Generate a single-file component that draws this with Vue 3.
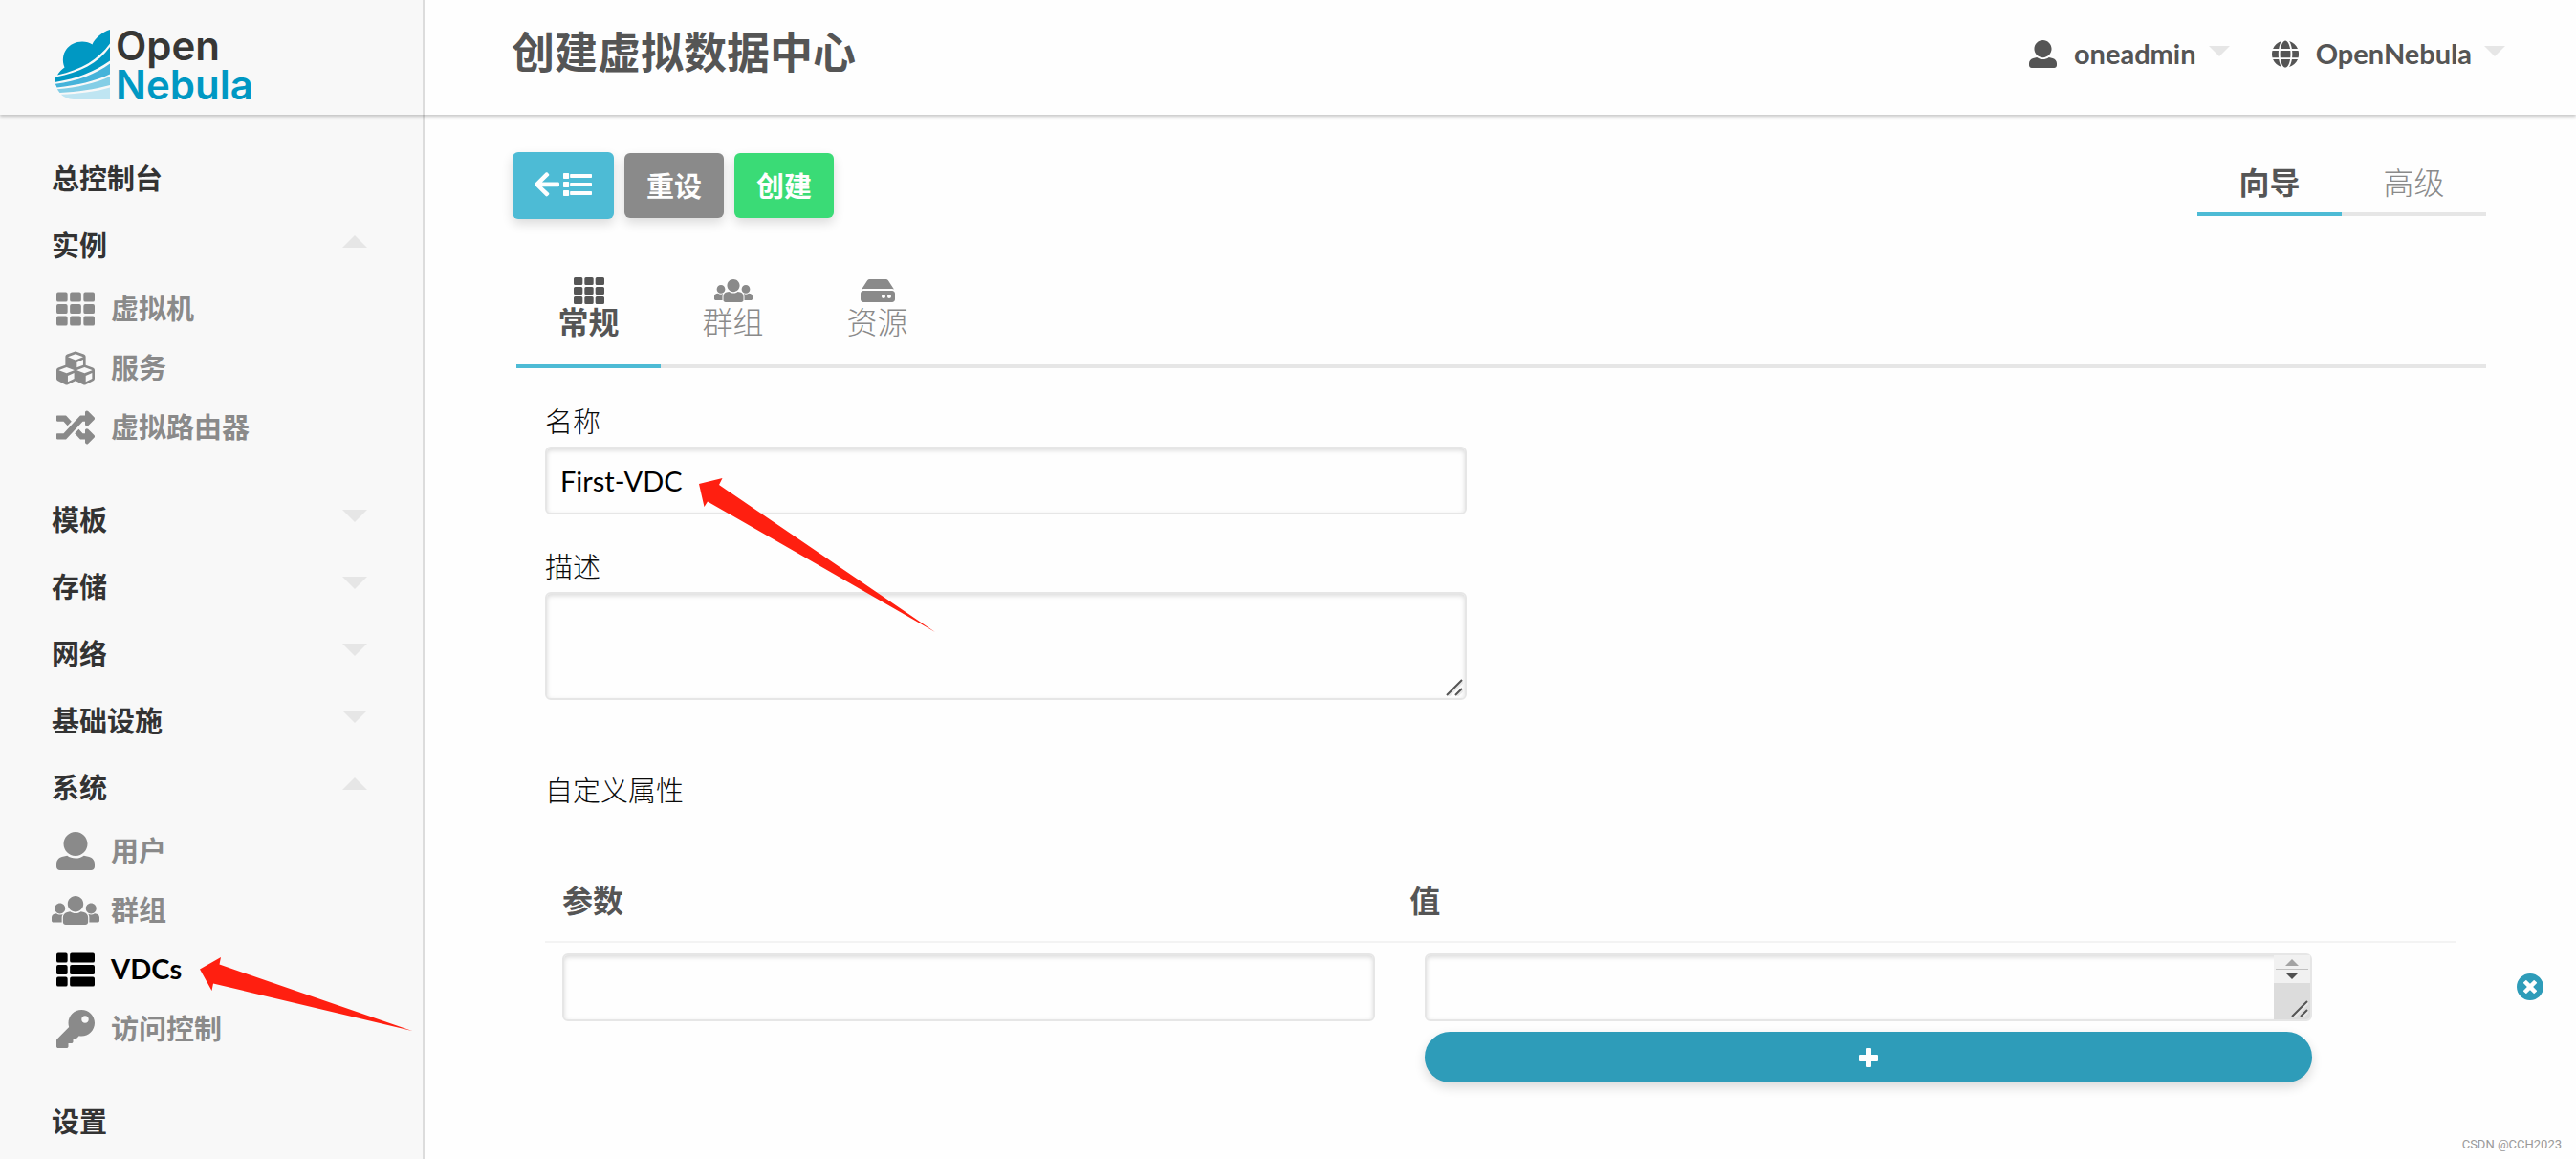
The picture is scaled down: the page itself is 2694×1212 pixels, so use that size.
<template>
  <div class="app">
    <header class="topbar">
      <a class="logo" href="#">
        <svg class="logo-mark" viewBox="0 0 58 73" aria-hidden="true">
          <path fill="#0098c3" d="M58 0v14.500C46 31 28 42 3 47.500C5 44 8 41 10.500 39.500C5 25 15 12.500 29 12.500C33 12.500 37 13.500 39.500 15.500C42 9 50 2.500 58 0z" />
          <path fill="#0098c3" d="M58 18v14.500C42 44 24 51 .3 55C0 53 .5 51 1.500 49.500C26 45 46 35 58 18z" />
          <path fill="#45b3da" d="M58 35.500v11C42 54 24 58 2.500 60.500L.8 56.800C24 54 43 46.500 58 35.500z" />
          <path fill="#84cee6" d="M58 49v9C42 62.500 24 65 5.500 66L2.800 62.300C24 60.500 43 56 58 49z" />
          <path fill="#bfe5f2" d="M58 60.500V73H20C14 72.500 10 71 6.800 67.800C25 67 43 65 58 60.500z" />
        </svg>
        <span class="logo-text">
          <span>Open</span>
          <span class="logo-blue">Nebula</span>
        </span>
      </a>
      <h1 class="title">创建虚拟数据中心</h1>
      <div class="account">
        <button v-for="m in menus" :key="m.label" class="menu-btn">
          <svg class="menu-icon" :viewBox="icons[m.icon].box"><path :d="icons[m.icon].d" /></svg>
          <span>{{ m.label }}</span>
          <i class="caret small"></i>
        </button>
      </div>
    </header>

    <nav class="sidebar">
      <div v-for="group in nav" :key="group.label" class="nav-group">
        <a href="#" class="nav-main" @click.prevent="toggle(group)">
          <span>{{ group.label }}</span>
          <i v-if="group.children" :class="['caret', { up: group.open }]"></i>
        </a>
        <ul v-if="group.open" class="nav-sub">
          <li v-for="item in group.children" :key="item.label">
            <a
              href="#"
              :class="['nav-item', { active: current === item.label }]"
              @click.prevent="current = item.label"
            >
              <span class="nav-icon">
                <svg :viewBox="icons[item.icon].box"><path :d="icons[item.icon].d" /></svg>
              </span>
              <span>{{ item.label }}</span>
            </a>
            <svg v-if="item.pointer" class="pointer pointer-nav" viewBox="0 0 222 77" aria-hidden="true">
              <path d="M0 12.500L22 0L20.500 7.500L222 77L14 27.500L12.500 35z" />
            </svg>
          </li>
        </ul>
      </div>
    </nav>

    <main class="content">
      <div class="toolbar">
        <div class="actions">
          <button class="btn btn-back" aria-label="返回列表">
            <svg class="icon-arrow" :viewBox="icons.arrow.box"><path :d="icons.arrow.d" /></svg>
            <svg class="icon-list" :viewBox="icons.list.box"><path :d="icons.list.d" /></svg>
          </button>
          <button class="btn btn-reset" @click="reset">重设</button>
          <button class="btn btn-create">创建</button>
        </div>
        <div class="modes">
          <button
            v-for="m in modes"
            :key="m"
            :class="['mode', { active: mode === m }]"
            @click="mode = m"
          >{{ m }}</button>
        </div>
      </div>

      <div class="tabs">
        <button
          v-for="t in tabs"
          :key="t.label"
          :class="['tab', { active: tab === t.label }]"
          @click="tab = t.label"
        >
          <svg class="tab-icon" :viewBox="icons[t.icon].box"><path :d="icons[t.icon].d" /></svg>
          <span>{{ t.label }}</span>
        </button>
      </div>

      <form class="form" @submit.prevent>
        <div class="field">
          <label for="vdc-name">名称</label>
          <input id="vdc-name" v-model="form.name" class="control" type="text" />
          <svg class="pointer pointer-name" viewBox="0 0 247 161" aria-hidden="true">
            <path d="M0 6L24.500 0L21 7L247 161L9 24.500L5.500 30z" />
          </svg>
        </div>
        <div class="field">
          <label for="vdc-desc">描述</label>
          <div class="area">
            <textarea id="vdc-desc" v-model="form.description" class="control tall"></textarea>
            <svg class="grip" viewBox="0 0 18 18" aria-hidden="true">
              <path class="grip-light" d="M3 18L18 3M12 18L18 12" />
              <path d="M1 17L17 1M10 17L17 10" />
            </svg>
          </div>
        </div>

        <p class="section">自定义属性</p>
        <table class="attrs">
          <colgroup>
            <col class="col-key" />
            <col class="col-value" />
            <col class="col-space" />
            <col />
          </colgroup>
          <thead>
            <tr>
              <th>参数</th>
              <th>值</th>
              <th></th>
              <td></td>
            </tr>
          </thead>
          <tbody>
            <tr v-for="(attr, i) in form.attrs" :key="attr.id">
              <td class="cell-key">
                <input v-model="attr.key" class="control" type="text" aria-label="参数" />
              </td>
              <td class="cell-value">
                <div class="area">
                  <textarea v-model="attr.value" class="control" aria-label="值"></textarea>
                  <div class="scroller" aria-hidden="true">
                    <svg class="scroller-arrows" viewBox="0 0 38 29">
                      <path fill="#a3a3a3" d="M12 11L19 4L26 11z" />
                      <path fill="#c1c1c1" d="M2 14H36V15H2z" />
                      <path fill="#505050" d="M12 18L19 25L26 18z" />
                    </svg>
                  </div>
                  <svg class="grip" viewBox="0 0 18 18" aria-hidden="true">
                    <path class="grip-light" d="M3 18L18 3M12 18L18 12" />
                    <path d="M1 17L17 1M10 17L17 10" />
                  </svg>
                </div>
              </td>
              <td></td>
              <td class="cell-remove">
                <button type="button" class="remove" aria-label="删除" @click="form.attrs.splice(i, 1)">
                  <svg :viewBox="icons.remove.box"><path :d="icons.remove.d" /></svg>
                </button>
              </td>
            </tr>
          </tbody>
          <tfoot>
            <tr>
              <td></td>
              <td class="cell-value">
                <button type="button" class="add" aria-label="添加" @click="addAttr">
                  <svg viewBox="0 0 20 20"><path d="M8 0h4q1 0 1 1v6h6q1 0 1 1v4q0 1-1 1h-6v6q0 1-1 1h-4q-1 0-1-1v-6h-6q-1 0-1-1v-4q0-1 1-1h6v-6q0-1 1-1z" /></svg>
                </button>
              </td>
            </tr>
          </tfoot>
        </table>
      </form>
    </main>

    <span class="watermark">CSDN @CCH2023</span>
  </div>
</template>

<script setup>
import { ref, reactive } from 'vue'

// rounded rectangle as path data
function box(x, y, w, h, r) {
  return `M${x + r} ${y}h${w - 2 * r}a${r} ${r} 0 0 1 ${r} ${r}v${h - 2 * r}a${r} ${r} 0 0 1-${r} ${r}h-${w - 2 * r}a${r} ${r} 0 0 1-${r}-${r}v-${h - 2 * r}a${r} ${r} 0 0 1 ${r}-${r}z`
}

const rows = [32, 192, 352]

const icons = {
  th: {
    box: '0 0 512 512',
    d: rows.map(y => box(0, y, 149, 128, 24) + box(181, y, 150, 128, 24) + box(363, y, 149, 128, 24)).join(''),
  },
  thList: {
    box: '0 0 512 512',
    d: rows.map(y => box(0, y, 149, 128, 24) + box(181, y, 331, 128, 24)).join(''),
  },
  list: {
    box: '0 0 512 512',
    d: [50, 204, 358].map(y => box(0, y, 104, 104, 12) + box(122, y + 18, 390, 68, 12)).join(''),
  },
  cubes: {
    box: '0 0 512 512',
    d: 'M488.6 250.2L392 214V105.5c0-15-9.3-28.4-23.4-33.7l-100-37.5c-8.1-3.1-17.1-3.1-25.3 0l-100 37.5c-14.1 5.3-23.4 18.7-23.4 33.7V214l-96.6 36.2C9.3 255.5 0 268.9 0 283.9V394c0 13.6 7.7 26.1 19.9 32.2l100 50c10.1 5.1 22.1 5.1 32.2 0l103.9-52 103.9 52c10.1 5.1 22.1 5.1 32.2 0l100-50c12.2-6.1 19.9-18.6 19.9-32.2V283.9c0-15-9.3-28.4-23.4-33.7zM358 214.8l-85 31.9v-68.2l85-37v73.3zM154 104.1l102-38.2 102 38.2v.6l-102 41.4-102-41.4v-.6zm84 291.1l-85 42.5v-79.1l85-38.8v75.4zm0-112l-102 41.4-102-41.4v-.6l102-38.2 102 38.2v.6zm240 112l-85 42.5v-79.1l85-38.8v75.4zm0-112l-102 41.4-102-41.4v-.6l102-38.2 102 38.2v.6z',
  },
  random: {
    box: '0 0 512 512',
    d: 'M504.971 359.029c9.373 9.373 9.373 24.569 0 33.941l-80 79.984c-15.01 15.01-40.971 4.49-40.971-16.971V416h-58.785a12.004 12.004 0 0 1-8.773-3.812l-70.556-75.596 53.333-57.143L352 336h32v-39.981c0-21.438 25.943-31.998 40.971-16.971l80 79.981zM12 176h84l52.781 56.551 53.333-57.143-70.556-75.596A11.999 11.999 0 0 0 122.785 96H12c-6.627 0-12 5.373-12 12v56c0 6.627 5.373 12 12 12zm372 0v39.984c0 21.46 25.961 31.98 40.971 16.971l80-79.984c9.373-9.373 9.373-24.569 0-33.941l-80-79.981C409.943 24.021 384 34.582 384 56.019V96h-58.785a12.004 12.004 0 0 0-8.773 3.812L96 336H12c-6.627 0-12 5.373-12 12v56c0 6.627 5.373 12 12 12h110.785c3.326 0 6.503-1.381 8.773-3.812L352 176h32z',
  },
  user: {
    box: '0 0 512 512',
    d: 'M256 0c88.366 0 160 71.634 160 160s-71.634 160-160 160S96 248.366 96 160 167.634 0 256 0zm183.283 333.821l-71.313-17.828c-74.923 53.89-165.738 41.864-223.94 0l-71.313 17.828C29.981 344.505 0 382.903 0 426.955V464c0 26.51 21.49 48 48 48h416c26.51 0 48-21.49 48-48v-37.045c0-44.052-29.981-82.45-72.717-93.134z',
  },
  users: {
    box: '0 0 640 512',
    d: 'M320 64c57.99 0 105 47.01 105 105s-47.01 105-105 105-105-47.01-105-105S262.01 64 320 64zm113.463 217.366l-39.982-9.996c-49.168 35.365-108.766 27.473-146.961 0l-39.982 9.996C174.485 289.379 152 318.177 152 351.216V412c0 19.882 16.118 36 36 36h264c19.882 0 36-16.118 36-36v-60.784c0-33.039-22.485-61.837-54.537-69.85zM528 300c38.66 0 70-31.34 70-70s-31.34-70-70-70-70 31.34-70 70 31.34 70 70 70zm-416 0c38.66 0 70-31.34 70-70s-31.34-70-70-70-70 31.34-70 70 31.34 70 70 70zm24 112v-60.784c0-16.551 4.593-32.204 12.703-45.599-29.988 14.72-63.336 8.708-85.69-7.37l-26.655 6.664C14.99 310.252 0 329.452 0 351.477V392c0 13.255 10.745 24 24 24h112.169a52.417 52.417 0 0 1-.169-4zm467.642-107.09l-26.655-6.664c-27.925 20.086-60.89 19.233-85.786 7.218C499.369 318.893 504 334.601 504 351.216V412c0 1.347-.068 2.678-.169 4H616c13.255 0 24-10.745 24-24v-40.523c0-22.025-14.99-41.225-36.358-46.567z',
  },
  key: {
    box: '0 0 512 512',
    d: 'M512 176.001C512 273.203 433.202 352 336 352c-11.22 0-22.19-1.062-32.827-3.069l-24.012 27.014A23.999 23.999 0 0 1 261.223 384H224v40c0 13.255-10.745 24-24 24h-40v40c0 13.255-10.745 24-24 24H24c-13.255 0-24-10.745-24-24v-78.059c0-6.365 2.529-12.47 7.029-16.971l161.802-161.802C163.108 213.814 160 195.271 160 176 160 78.798 238.797.001 335.999 0 433.488-.001 512 78.511 512 176.001zM336 128c0 26.51 21.49 48 48 48s48-21.49 48-48-21.49-48-48-48-48 21.49-48 48z',
  },
  hdd: {
    box: '0 0 576 512',
    d: 'M576 304v96c0 26.51-21.49 48-48 48H48c-26.51 0-48-21.49-48-48v-96c0-26.51 21.49-48 48-48h480c26.51 0 48 21.49 48 48zm-48-80a79.557 79.557 0 0 1 30.777 6.165L462.25 85.374A48.003 48.003 0 0 0 422.311 64H153.689a48 48 0 0 0-39.938 21.374L17.223 230.165A79.557 79.557 0 0 1 48 224h480zm-48 96c-17.673 0-32 14.327-32 32s14.327 32 32 32 32-14.327 32-32-14.327-32-32-32zm-96 0c-17.673 0-32 14.327-32 32s14.327 32 32 32 32-14.327 32-32-14.327-32-32-32z',
  },
  arrow: {
    box: '0 0 448 512',
    d: 'M257.5 445.1l-22.2 22.2c-9.4 9.4-24.6 9.4-33.9 0L7 273c-9.4-9.4-9.4-24.6 0-33.9L201.4 44.7c9.4-9.4 24.6-9.4 33.9 0l22.2 22.2c9.5 9.5 9.3 25-.4 34.3L136.6 216H424c13.3 0 24 10.7 24 24v32c0 13.3-10.7 24-24 24H136.6l120.5 114.8c9.8 9.3 10 24.8.4 34.3z',
  },
  globe: {
    box: '0 0 496 512',
    d: 'M336.5 160C322 70.7 287.8 8 248 8s-74 62.7-88.5 152h177zM152 256c0 22.2 1.2 43.5 3.3 64h185.3c2.1-20.5 3.3-41.8 3.3-64s-1.2-43.5-3.3-64H155.3c-2.1 20.5-3.3 41.8-3.3 64zm324.7-96c-28.6-67.9-86.5-120.4-158-141.6 24.4 33.8 41.2 84.7 50 141.6h108zM177.2 18.4C105.8 39.6 47.8 92.1 19.3 160h108c8.7-56.9 25.5-107.8 49.9-141.6zM487.4 192H372.7c2.1 21 3.3 42.5 3.3 64s-1.2 43-3.3 64h114.6c5.5-20.5 8.6-41.8 8.6-64s-3.1-43.5-8.5-64zM120 256c0-21.5 1.2-43 3.3-64H8.6C3.2 212.5 0 233.8 0 256s3.2 43.5 8.6 64h114.6c-2-21-3.2-42.5-3.2-64zm39.5 96c14.5 89.3 48.7 152 88.5 152s74-62.7 88.5-152h-177zm159.3 141.6c71.4-21.2 129.4-73.7 158-141.6h-108c-8.8 56.9-25.6 107.8-50 141.6zM19.3 352c28.6 67.9 86.5 120.4 158 141.6-24.4-33.8-41.2-84.7-50-141.6h-108z',
  },
  remove: {
    box: '8 8 496 496',
    d: 'M256 8C119 8 8 119 8 256s111 248 248 248 248-111 248-248S393 8 256 8zm121.6 313.1c4.7 4.7 4.7 12.3 0 17L338 377.6c-4.7 4.7-12.3 4.7-17 0L256 312l-65.1 65.6c-4.7 4.7-12.3 4.7-17 0L134.4 338c-4.7-4.7-4.7-12.3 0-17l65.6-65-65.6-65.1c-4.7-4.7-4.7-12.3 0-17l39.6-39.6c4.7-4.7 12.3-4.7 17 0l65 65.7 65.1-65.6c4.7-4.7 12.3-4.7 17 0l39.6 39.6c4.7 4.7 4.7 12.3 0 17L312 256l65.6 65.1z',
  },
}

const menus = [
  { label: 'oneadmin', icon: 'user' },
  { label: 'OpenNebula', icon: 'globe' },
]

const nav = reactive([
  { label: '总控制台' },
  {
    label: '实例',
    open: true,
    children: [
      { label: '虚拟机', icon: 'th' },
      { label: '服务', icon: 'cubes' },
      { label: '虚拟路由器', icon: 'random' },
    ],
  },
  { label: '模板', open: false, children: [] },
  { label: '存储', open: false, children: [] },
  { label: '网络', open: false, children: [] },
  { label: '基础设施', open: false, children: [] },
  {
    label: '系统',
    open: true,
    children: [
      { label: '用户', icon: 'user' },
      { label: '群组', icon: 'users' },
      { label: 'VDCs', icon: 'thList', pointer: true },
      { label: '访问控制', icon: 'key' },
    ],
  },
  { label: '设置' },
])

const modes = ['向导', '高级']
const tabs = [
  { label: '常规', icon: 'th' },
  { label: '群组', icon: 'users' },
  { label: '资源', icon: 'hdd' },
]

const current = ref('VDCs')
const mode = ref('向导')
const tab = ref('常规')
let nextId = 2

const form = reactive({
  name: 'First-VDC',
  description: '',
  attrs: [{ id: 1, key: '', value: '' }],
})

function toggle(group) {
  if (group.children) group.open = !group.open
}

function addAttr() {
  form.attrs.push({ id: nextId++, key: '', value: '' })
}

function reset() {
  form.name = ''
  form.description = ''
  form.attrs = [{ id: nextId++, key: '', value: '' }]
}
</script>

<style>
body { margin: 0; background: #fefefe; }
</style>

<style scoped>
.app {
  display: grid;
  grid-template-columns: 444px 1fr;
  grid-template-rows: 120px 1fr;
  min-height: 100vh;
  position: relative;
  font-family: Lato, "Noto Sans CJK SC", sans-serif;
  font-size: 29px;
  color: #0a0a0a;
  background: linear-gradient(to right, #f8f8f8 442px, #dcdcdc 442px, #dcdcdc 444px, #fefefe 444px);
}

.app * { box-sizing: border-box; }
svg { display: block; fill: currentColor; }
a { text-decoration: none; }
button { border: none; background: none; padding: 0; font: inherit; color: inherit; cursor: pointer; }

.topbar {
  grid-column: 1 / -1;
  display: flex;
  align-items: center;
  box-shadow: 0 2px 3px rgba(0, 0, 0, 0.22);
}

.logo {
  display: flex;
  align-items: center;
  gap: 6px;
  width: 535px;
  padding: 15px 0 0 57px;
}

.logo-mark { width: 58px; height: 73px; }

.logo-text {
  display: flex;
  flex-direction: column;
  font-family: Inter, Lato, sans-serif;
  font-size: 42px;
  line-height: 41px;
  font-weight: 600;
  color: #373735;
}

.logo-blue { color: #0098c3; }

.title {
  flex: 1;
  margin: 0;
  padding-bottom: 10px;
  font-size: 45px;
  line-height: 56px;
  font-weight: 700;
  color: #555;
}

.account { display: flex; gap: 44px; padding: 0 74px 8px 0; color: #555; }
.menu-btn { display: flex; align-items: center; font-weight: 700; line-height: 36px; }
.menu-icon { height: 29px; margin-right: 18px; }

.caret {
  border: 13px solid transparent;
  border-top-color: #e6e6e6;
  border-bottom: none;
}

.caret.up { border-top: none; border-bottom: 13px solid #e6e6e6; }
.caret.small { border-width: 11px 11px 0; margin: 0 0 5px 13px; }

.sidebar { padding-top: 30px; font-weight: 700; }

.nav-main {
  display: flex;
  align-items: center;
  justify-content: space-between;
  height: 70px;
  padding: 0 60px 0 54px;
  color: #333;
}

.nav-main .caret { margin-bottom: 6px; }

.nav-sub { list-style: none; margin: 0; padding: 0 0 31px; }
.nav-sub li { position: relative; }

.nav-item {
  display: flex;
  align-items: center;
  gap: 12px;
  height: 62px;
  padding-left: 54px;
  color: #8a8a8a;
}

.nav-item.active { color: #000; }
.nav-icon { display: flex; justify-content: center; width: 50px; padding-top: 4px; }
.nav-icon svg { height: 40px; }

.pointer { position: absolute; fill: #ff1f10; pointer-events: none; z-index: 1; }
.pointer-nav { left: 209px; top: 20px; width: 222px; }
.pointer-name { left: 161px; top: 80px; width: 247px; }

.content { padding: 39px 94px 0 92px; }

.toolbar { display: flex; justify-content: space-between; align-items: flex-start; height: 70px; }
.actions { display: flex; align-items: center; gap: 11px; }

.btn {
  height: 68px;
  padding: 0 23px 2px;
  border-radius: 6px;
  color: #fefefe;
  font-weight: 700;
  box-shadow: 0 5px 12px rgba(0, 0, 0, 0.14);
}

.btn-back { display: flex; align-items: center; gap: 4px; height: 70px; background: #4dbbd5; }
.btn-reset { background: #8a8a8a; }
.btn-create { background: #3adb76; }
.icon-arrow { width: 26px; }
.icon-list { width: 30px; }

.modes { display: flex; }

.mode,
.tab {
  width: 151px;
  border-bottom: 4px solid #e6e6e6;
  font-size: 32px;
  font-weight: 300;
  color: #8a8a8a;
}

.mode { height: 67px; line-height: 63px; }

.mode.active,
.tab.active {
  border-bottom-color: #4dbbd5;
  font-weight: 700;
  color: #555;
}

.tabs {
  display: flex;
  margin: 59px 0 0 4px;
  box-shadow: inset 0 -4px #e6e6e6;
}

.tab {
  display: flex;
  flex-direction: column;
  align-items: center;
  padding-bottom: 27px;
  line-height: 34px;
}

.tab-icon { height: 32px; }

.form { padding: 35px 0 0 34px; }
.field { position: relative; width: 47.5%; margin-bottom: 34px; }

label,
.section {
  display: block;
  margin: 0 0 5px;
  line-height: 42px;
  font-weight: 300;
}

.control {
  display: block;
  width: 100%;
  height: 71px;
  padding: 0 14px;
  border: 2px solid #e6e6e6;
  border-radius: 6px;
  background: #fefefe;
  box-shadow: inset 0 2px 5px rgba(0, 0, 0, 0.14);
  font: inherit;
  color: #000;
  outline: none;
  resize: none;
  overflow: hidden;
}

.control:focus { border-color: #8a8a8a; }
.control.tall { height: 113px; padding: 14px; }

.area { position: relative; }

.grip {
  position: absolute;
  right: 4px;
  bottom: 4px;
  width: 18px;
  height: 18px;
  fill: none;
  stroke: #555;
  stroke-width: 2;
}

.grip-light { stroke: #e8e8e8; }

.scroller {
  position: absolute;
  top: 2px;
  right: 2px;
  bottom: 2px;
  width: 38px;
  border-radius: 0 4px 4px 0;
  background: #dcdcdc;
}

.scroller-arrows { width: 38px; background: #f1f1f1; }

.section { margin: 74px 0 53px; }

/* the remove column sticks out into the page margin */
.attrs {
  width: calc(100% + 60px);
  table-layout: fixed;
  border-collapse: collapse;
}

.attrs td { padding: 11px 0 0; }
.col-key { width: 42.4%; }
.col-value { width: 46.8%; }
.col-space { width: 6.4%; }

.attrs th {
  padding: 17px 18px 18px;
  border-bottom: 2px solid #f3f3f3;
  font-size: 32px;
  line-height: 48px;
  text-align: left;
  color: #555;
}

.attrs .cell-key { padding: 11px 18px 0; }
.attrs .cell-value { padding: 11px 16px 0 34px; }

.remove { display: block; margin-left: auto; color: #2e9cb9; }
.remove svg { width: 28px; height: 28px; }

.add {
  display: flex;
  align-items: center;
  justify-content: center;
  width: 100%;
  height: 53px;
  border-radius: 27px;
  background: #2e9cb9;
  color: #fefefe;
  box-shadow: 0 5px 12px rgba(0, 0, 0, 0.14);
}

.add svg { width: 20px; }

.watermark {
  position: absolute;
  right: 15px;
  bottom: 7px;
  font-family: Roboto, "Liberation Sans", sans-serif;
  font-size: 13px;
  line-height: 16px;
  color: #999;
}
</style>
